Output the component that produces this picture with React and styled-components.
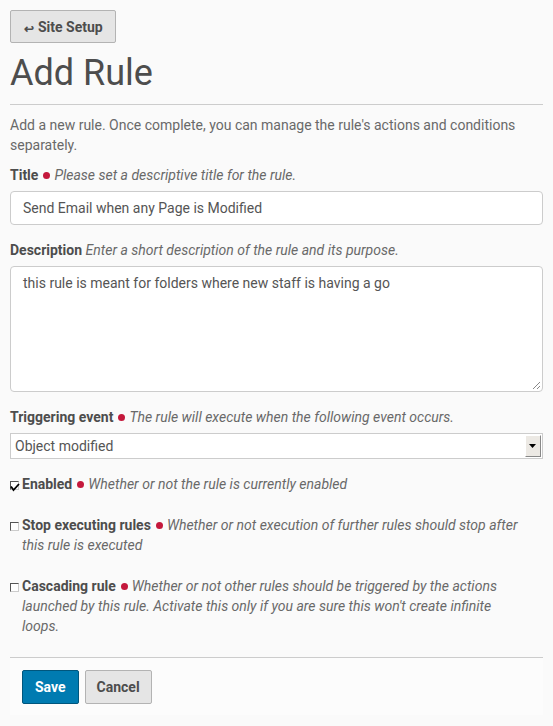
import React from 'react';
import styled, { createGlobalStyle } from 'styled-components';

const GlobalStyle = createGlobalStyle`
  html, body {
    margin: 0;
    padding: 0;
    background: #fafafa;
  }
  body {
    font-family: Roboto, "Liberation Sans", sans-serif;
    font-size: 14px;
    line-height: 20px;
    color: #4d4d4d;
  }
`;

const Page = styled.div`
  padding: 10px 10px 0;
`;

const BackButton = styled.button`
  display: inline-flex;
  align-items: center;
  gap: 4px;
  height: 33px;
  padding: 0 12px 0 13px;
  background: #e5e5e5;
  border: 1px solid #b3b3b3;
  border-radius: 2px;
  font-family: inherit;
  font-size: 14px;
  font-weight: 700;
  color: #4d4d4d;

  span {
    font-size: 12px;
    margin-top: 4px;
  }
`;

const Heading = styled.h1`
  margin: 8px 0 0;
  padding-bottom: 9px;
  font-size: 36px;
  line-height: 44px;
  font-weight: 400;
  color: #4d4d4d;
  border-bottom: 1px solid #ccc;
`;

const Intro = styled.p`
  margin: 10px 0 0;
  color: #696969;
`;

const Field = styled.div`
  margin-top: ${(p) => p.$top || 15}px;
`;

const Label = styled.label`
  display: block;
  font-weight: 700;
  color: #4d4d4d;
  margin-bottom: 6px;
`;

const Required = styled.span`
  display: inline-block;
  width: 7px;
  height: 7px;
  margin: 0 4px 1px 5px;
  border-radius: 50%;
  background: #c4183c;
`;

const Help = styled.span`
  font-weight: 400;
  font-style: italic;
  color: #696969;
`;

const TextInput = styled.div`
  box-sizing: border-box;
  height: 34px;
  padding: 6px 12px;
  background: #fff;
  border: 1px solid #ccc;
  border-radius: 4px;
  color: #555;
`;

const TextArea = styled.div`
  position: relative;
  box-sizing: border-box;
  height: 126px;
  padding: 6px 12px;
  background: #fff;
  border: 1px solid #ccc;
  border-radius: 4px;
  color: #555;

  svg {
    position: absolute;
    right: 1px;
    bottom: 1px;
  }
`;

const Select = styled.div`
  display: flex;
  align-items: center;
  box-sizing: border-box;
  height: 26px;
  padding-left: 4px;
  background: #fff;
  border: 1px solid #ccc;
  color: #555;
`;

const SelectText = styled.span`
  flex: 1;
`;

const Arrow = styled.span`
  display: flex;
  align-items: center;
  justify-content: center;
  width: 16px;
  height: 22px;
  margin-right: 1px;
  box-sizing: border-box;
  background: #ece9e4;
  border: 1px solid;
  border-color: #fff #888 #888 #fff;
`;

const CheckRow = styled.div`
  display: flex;
  align-items: flex-start;
  margin-top: ${(p) => p.$top}px;
  padding-right: 20px;
`;

const Box = styled.span`
  position: relative;
  flex: none;
  width: 9px;
  height: 9px;
  margin-top: 7px;
  margin-right: 3px;
  box-sizing: border-box;
  background: #fff;
  border: 1px solid #555;
  border-right-color: #ccc;
  border-bottom-color: #ccc;

  svg {
    position: absolute;
    left: -1px;
    top: 1px;
  }
`;

const CheckText = styled.div`
  font-weight: 700;
  color: #4d4d4d;
`;

const Footer = styled.div`
  margin-top: 21px;
  border-top: 1px solid #ccc;
  background: #fcfcfc;
  padding: 12px 12px 11px;
  display: flex;
  gap: 6px;
`;

const Button = styled.button`
  height: 34px;
  padding: 0 ${(p) => (p.$primary ? 12 : 11)}px;
  border-radius: 2px;
  font-family: inherit;
  font-size: 14px;
  font-weight: 700;
  border: 1px solid ${(p) => (p.$primary ? '#00567d' : '#b3b3b3')};
  background: ${(p) => (p.$primary ? '#007bb1' : '#e5e5e5')};
  color: ${(p) => (p.$primary ? '#fff' : '#4d4d4d')};
`;

function Checkbox({ checked }) {
  return (
    <Box>
      {checked && (
        <svg width="10" height="9" viewBox="0 0 10 9">
          <path d="M1 3.5 L3.5 7 L9 1" fill="none" stroke="#000" strokeWidth="1.8" />
        </svg>
      )}
    </Box>
  );
}

function App() {
  return (
    <Page>
      <GlobalStyle />
      <BackButton type="button">
        <span>↩</span>
        Site Setup
      </BackButton>
      <Heading>Add Rule</Heading>
      <Intro>
        Add a new rule. Once complete, you can manage the rule's actions and conditions
        separately.
      </Intro>

      <Field $top={10}>
        <Label>
          Title
          <Required />
          <Help>Please set a descriptive title for the rule.</Help>
        </Label>
        <TextInput>Send Email when any Page is Modified</TextInput>
      </Field>

      <Field $top={15}>
        <Label>
          Description <Help>Enter a short description of the rule and its purpose.</Help>
        </Label>
        <TextArea>
          this rule is meant for folders where new staff is having a go
          <svg width="10" height="10" viewBox="0 0 10 10">
            <path d="M9 2 L2 9 M9 6 L6 9" stroke="#888" strokeWidth="1" />
          </svg>
        </TextArea>
      </Field>

      <Field $top={15}>
        <Label>
          Triggering event
          <Required />
          <Help>The rule will execute when the following event occurs.</Help>
        </Label>
        <Select>
          <SelectText>Object modified</SelectText>
          <Arrow>
            <svg width="8" height="5" viewBox="0 0 8 5">
              <path d="M0 0 H7 L3.5 4 Z" fill="#000" />
            </svg>
          </Arrow>
        </Select>
      </Field>

      <CheckRow $top={15}>
        <Checkbox checked />
        <CheckText>
          Enabled
          <Required />
          <Help>Whether or not the rule is currently enabled</Help>
        </CheckText>
      </CheckRow>

      <CheckRow $top={21}>
        <Checkbox />
        <CheckText>
          Stop executing rules
          <Required />
          <Help>Whether or not execution of further rules should stop after this rule is executed</Help>
        </CheckText>
      </CheckRow>

      <CheckRow $top={21}>
        <Checkbox />
        <CheckText>
          Cascading rule
          <Required />
          <Help>
            Whether or not other rules should be triggered by the actions launched by this rule.
            Activate this only if you are sure this won't create infinite loops.
          </Help>
        </CheckText>
      </CheckRow>

      <Footer>
        <Button type="button" $primary>Save</Button>
        <Button type="button">Cancel</Button>
      </Footer>
    </Page>
  );
}

export default App;
